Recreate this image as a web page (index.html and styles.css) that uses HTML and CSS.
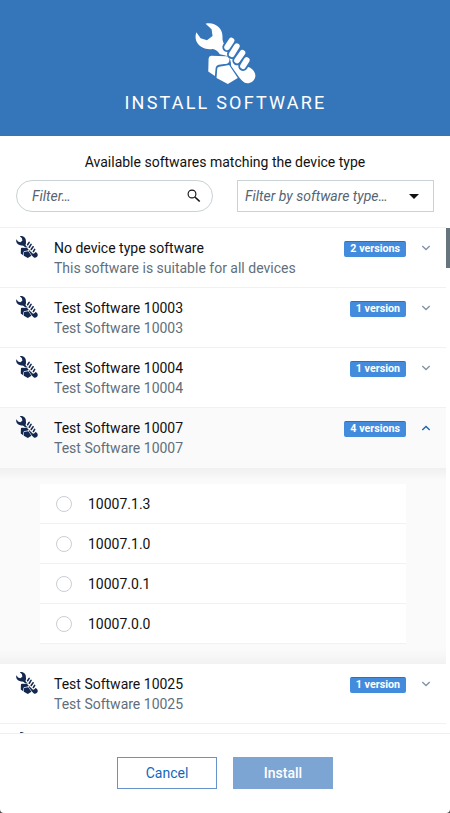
FILE: index.html
```html
<!DOCTYPE html>
<html lang="en">
<head>
<meta charset="utf-8">
<title>Install software</title>
<link rel="stylesheet" href="styles.css">
</head>
<body>
<svg class="defs" aria-hidden="true">
  <symbol id="tool" viewBox="45 38 182 184">
    <path d="M76 40C90 36 108 41 118 53C128 65 127 78 127 88C128 99 135 107 143 115L203 170C213 173 227 183 226 199C224 214 207 223 194 218C187 215 182 208 177 202L153 168C153 151 149 138 133 135L119 132C111 122 104 115 94 117C73 120 48 106 46 85Q45 75 48 66L61 84L80 90L97 77L94 57Z"/>
    <path d="M93 137L135 138C145 138 150 146 147 154C145 160 140 161 132 162L116 164Q107 166 106 176L104 198L84 184L85 145Q86 138 93 137Z"/>
    <path d="M117 170L147 165L173 204L143 222L109 204L111 177Q111 171 117 170Z"/>
    <g class="gap"><path d="M154 91L141 111M170 108L155 132M187 128L171 151M200 150L189 168"/></g>
    <g class="finger"><path d="M154 91L141 111M170 108L155 132M187 128L171 151M200 150L189 168"/></g>
  </symbol>
  <symbol id="chevron" viewBox="0 0 10 6"><path d="M1.3 1L5 4.5L8.7 1"/></symbol>
</svg>
<main class="dialog">
  <header class="header">
    <svg class="hero"><use href="#tool"/></svg>
    <h1>Install software</h1>
  </header>
  <section class="filters">
    <p>Available softwares matching the device type</p>
    <div class="fields">
      <div class="field search"><span>Filter…</span>
        <svg class="lens" viewBox="0 0 14 14"><circle cx="5" cy="5" r="3.9"/><path class="neck" d="M7.8 7.8L9.5 9.5"/><path class="grip" d="M9 9L12.7 12.5"/></svg>
      </div>
      <div class="field select"><span>Filter by software type…</span><i class="caret"></i></div>
    </div>
  </section>
  <section class="list">
    <div class="rows">
      <article class="row"><svg class="icon"><use href="#tool"/></svg><div class="text"><b>No device type software</b><span>This software is suitable for all devices</span></div><em>2 versions</em><svg class="chev"><use href="#chevron"/></svg></article>
      <article class="row"><svg class="icon"><use href="#tool"/></svg><div class="text"><b>Test Software 10003</b><span>Test Software 10003</span></div><em>1 version</em><svg class="chev"><use href="#chevron"/></svg></article>
      <article class="row"><svg class="icon"><use href="#tool"/></svg><div class="text"><b>Test Software 10004</b><span>Test Software 10004</span></div><em>1 version</em><svg class="chev"><use href="#chevron"/></svg></article>
      <article class="row open"><svg class="icon"><use href="#tool"/></svg><div class="text"><b>Test Software 10007</b><span>Test Software 10007</span></div><em>4 versions</em><svg class="chev"><use href="#chevron"/></svg></article>
      <div class="panel">
        <ul>
          <li><i></i>10007.1.3</li>
          <li><i></i>10007.1.0</li>
          <li><i></i>10007.0.1</li>
          <li><i></i>10007.0.0</li>
        </ul>
      </div>
      <article class="row"><svg class="icon"><use href="#tool"/></svg><div class="text"><b>Test Software 10025</b><span>Test Software 10025</span></div><em>1 version</em><svg class="chev"><use href="#chevron"/></svg></article>
      <article class="row"><svg class="icon"><use href="#tool"/></svg></article>
    </div>
    <div class="track"><div class="thumb"></div></div>
  </section>
  <footer class="footer"><button class="cancel">Cancel</button><button class="install">Install</button></footer>
</main>
</body>
</html>
```
FILE: styles.css
```css
* { box-sizing: border-box; }
body { margin: 0; background: #444; font-family: Roboto, "Liberation Sans", sans-serif; font-size: 14px; line-height: 20px; color: #111; }
.defs { position: absolute; width: 0; height: 0; }
.dialog { height: 813px; display: flex; flex-direction: column; background: #fff; border-radius: 0 0 4px 4px; overflow: hidden; }
.header { height: 136px; flex: none; display: flex; flex-direction: column; align-items: center; padding-top: 23px; background: #3576bb; color: #fff; }
.hero { width: 61px; height: 61px; fill: #fff; --bg: #3576bb; }
.gap { fill: none; stroke: var(--bg); stroke-width: var(--gap, 29); stroke-linecap: round; }
.finger { fill: none; stroke: var(--fg, #fff); stroke-width: var(--finger, 17.5); stroke-linecap: round; }
h1 { margin: 7px 0 0; font-size: 18px; line-height: 24px; font-weight: 400; letter-spacing: 2.2px; text-transform: uppercase; padding-left: 1px; }
.filters { height: 91px; flex: none; padding: 16px 16px 0; }
.filters p { margin: 0 0 8px; text-align: center; }
.fields { display: grid; grid-template-columns: 197px 197px; justify-content: space-between; }
.field { height: 32px; display: flex; align-items: center; justify-content: space-between; border: 1px solid #c9d2d5; color: #566573; font-style: italic; }
.search { border-radius: 16px; padding: 0 11px 0 15px; }
.select { padding: 0 14px 0 7px; }
.lens { width: 14px; height: 14px; margin-top: -1px; fill: none; stroke: #111; stroke-width: 1.1; }
.lens .grip { stroke-width: 1.7; }
.caret { border: 5px solid transparent; border-top-color: #111; border-bottom: 0; }
.list { height: 507px; flex: none; display: flex; overflow: hidden; border-bottom: 1px solid #eeeff0; }
.rows { flex: 1; }
.row { height: 60px; border-top: 1px solid #f0f1f2; padding: 10px 15px 0 16px; display: flex; align-items: flex-start; }
.icon { width: 22px; height: 22px; margin-top: -2px; margin-right: 16px; flex: none; fill: #14284f; --bg: #fff; --fg: #14284f; --gap: 34; --finger: 13; }
.text { flex: 1; display: flex; flex-direction: column; }
.text b { font-weight: 400; }
.text span { color: #5f6f7b; }
.row em { height: 16px; margin-top: 3px; padding: 0 6px; border-radius: 2px; background: #428bdd; border-top: 1px solid #1877d2; color: #fff; font: bold 10.7px/14px Roboto, sans-serif; }
.chev { width: 10px; height: 6px; margin: 7px 0 0 15px; fill: none; stroke: #8494a7; stroke-width: 1.4; }
.open { height: 61px; background: #fafafa; }
.open .icon { --bg: #fafafa; }
.open .chev { transform: rotate(180deg); stroke: #1c65b3; }
.panel { height: 196px; padding: 16px 40px 20px; background: linear-gradient(#f0f0f0, #fafafa 12px, #fafafa 182px, #f2f2f2); }
.panel ul { margin: 0; padding: 0; list-style: none; }
.panel li { height: 40px; display: flex; align-items: center; padding-left: 16px; background: #fff; border-bottom: 1px solid #f0f1f2; }
.panel li i { width: 16px; height: 16px; margin-right: 16px; border: 1px solid #cbcfd6; border-radius: 50%; }
.panel + .row { border-top: 0; height: 59px; }
.track { width: 4px; }
.thumb { height: 40px; margin-top: 1px; background: #66747d; }
.footer { flex: 1; display: flex; justify-content: center; gap: 16px; padding-top: 23px; }
.footer button { width: 100px; height: 32px; font: 14px Roboto, sans-serif; border: 1px solid #6792cc; background: #fff; color: #1267bd; padding: 0; }
.footer .install { background: #7da5d3; border-color: #7da5d3; color: #fff; font-weight: 500; }
```
